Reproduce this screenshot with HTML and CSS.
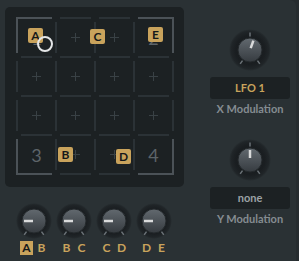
FILE: index.html
```html
<!DOCTYPE html>
<html lang="en">
  <head>
    <meta charset="UTF-8" />
    <title>XY Pad</title>
    <link rel="stylesheet" href="styles.css">
  </head>
  <body>
    <svg class="defs" width="0" height="0">
      <defs>
        <radialGradient id="halo">
          <stop offset="0" stop-color="#15191b" />
          <stop offset="0.7" stop-color="#1a1e21" />
          <stop offset="0.9" stop-color="#202528" />
          <stop offset="1" stop-color="#2a3134" />
        </radialGradient>
        <linearGradient id="body" x1="0" y1="0" x2="0" y2="1">
          <stop offset="0" stop-color="#62696f" />
          <stop offset="1" stop-color="#363b40" />
        </linearGradient>
      </defs>
    </svg>

    <div class="app">
      <div class="left">
        <div class="pad">
          <div class="grid">
            <svg class="lines" width="158" height="158" viewBox="0 0 158 158">
              <path stroke="#2b3236" stroke-width="2" fill="none"
                d="M44 1H75M83 1H114
                   M5 40H36M44 40H75M83 40H114M122 40H153
                   M5 79H36M44 79H75M83 79H114M122 79H153
                   M5 118H36M44 118H75M83 118H114M122 118H153
                   M44 157H75M83 157H114
                   M1 44V75M1 83V114
                   M40 5V36M40 44V75M40 83V114M40 122V153
                   M79 5V36M79 44V75M79 83V114M79 122V153
                   M118 5V36M118 44V75M118 83V114M118 122V153
                   M157 44V75M157 83V114" />
              <path stroke="#4b5257" stroke-width="2" fill="none"
                d="M1 36V1H36M122 1H157V36M1 122V157H36M122 157H157V122" />
              <path stroke="#394145" stroke-width="1" fill="none"
                d="M55 20.5h9M59.5 16v9M94 20.5h9M98.5 16v9
                   M16 59.5h9M20.5 55v9M55 59.5h9M59.5 55v9M94 59.5h9M98.5 55v9M133 59.5h9M137.5 55v9
                   M16 98.5h9M20.5 94v9M55 98.5h9M59.5 94v9M94 98.5h9M98.5 94v9M133 98.5h9M137.5 94v9
                   M55 137.5h9M59.5 133v9M94 137.5h9M98.5 133v9" />
            </svg>
            <div class="cell">1</div><div class="cell"></div><div class="cell"></div><div class="cell">2</div>
            <div class="cell"></div><div class="cell"></div><div class="cell"></div><div class="cell"></div>
            <div class="cell"></div><div class="cell"></div><div class="cell"></div><div class="cell"></div>
            <div class="cell">3</div><div class="cell"></div><div class="cell"></div><div class="cell">4</div>

            <span class="tag" style="left: 12px; top: 11px">A</span>
            <span class="tag" style="left: 74px; top: 12px">C</span>
            <span class="tag" style="left: 132px; top: 10px">E</span>
            <span class="tag" style="left: 42px; top: 130px">B</span>
            <span class="tag" style="left: 100px; top: 132px">D</span>
            <span class="cursor" style="left: 21px; top: 19px"></span>
          </div>
        </div>

        <div class="morph">
          <div class="morph-item">
            <svg class="knob" width="40" height="40" viewBox="-20 -20 40 40">
              <circle r="18" fill="url(#halo)" />
              <path d="M-7.5 10.6L-9.8 13.9M7.5 10.6L9.8 13.9" stroke="#6b7277" stroke-width="1.5" />
              <circle r="12" fill="url(#body)" stroke="#24292c" stroke-width="1" />
              <path d="M-10 0H-1" stroke="#d9dadb" stroke-width="2.5" />
            </svg>
            <div class="pair"><span class="on">A</span><span>B</span></div>
          </div>
          <div class="morph-item">
            <svg class="knob" width="40" height="40" viewBox="-20 -20 40 40">
              <circle r="18" fill="url(#halo)" />
              <path d="M-7.5 10.6L-9.8 13.9M7.5 10.6L9.8 13.9" stroke="#6b7277" stroke-width="1.5" />
              <circle r="12" fill="url(#body)" stroke="#24292c" stroke-width="1" />
              <path d="M-10 0H-1" stroke="#d9dadb" stroke-width="2.5" />
            </svg>
            <div class="pair"><span>B</span><span>C</span></div>
          </div>
          <div class="morph-item">
            <svg class="knob" width="40" height="40" viewBox="-20 -20 40 40">
              <circle r="18" fill="url(#halo)" />
              <path d="M-7.5 10.6L-9.8 13.9M7.5 10.6L9.8 13.9" stroke="#6b7277" stroke-width="1.5" />
              <circle r="12" fill="url(#body)" stroke="#24292c" stroke-width="1" />
              <path d="M-10 0H-1" stroke="#d9dadb" stroke-width="2.5" />
            </svg>
            <div class="pair"><span>C</span><span>D</span></div>
          </div>
          <div class="morph-item">
            <svg class="knob" width="40" height="40" viewBox="-20 -20 40 40">
              <circle r="18" fill="url(#halo)" />
              <path d="M-7.5 10.6L-9.8 13.9M7.5 10.6L9.8 13.9" stroke="#6b7277" stroke-width="1.5" />
              <circle r="12" fill="url(#body)" stroke="#24292c" stroke-width="1" />
              <path d="M-10 0H-1" stroke="#d9dadb" stroke-width="2.5" />
            </svg>
            <div class="pair"><span>D</span><span>E</span></div>
          </div>
        </div>
      </div>

      <div class="right">
        <div class="mod">
          <svg class="knob" width="44" height="44" viewBox="-22 -22 44 44">
            <circle r="21" fill="url(#halo)" />
            <path d="M0 -13.5V-17.5M-7.5 10.6L-9.8 13.9M7.5 10.6L9.8 13.9" stroke="#6b7277" stroke-width="1.5" />
            <circle r="12" fill="url(#body)" stroke="#24292c" stroke-width="1" />
            <path d="M0.7 -1.9L3.4 -9.4" stroke="#d9dadb" stroke-width="2.5" />
          </svg>
          <div class="source active">LFO 1</div>
          <div class="caption">X Modulation</div>
        </div>
        <div class="mod">
          <svg class="knob" width="44" height="44" viewBox="-22 -22 44 44">
            <circle r="21" fill="url(#halo)" />
            <path d="M0 -13.5V-17.5M-7.5 10.6L-9.8 13.9M7.5 10.6L9.8 13.9" stroke="#6b7277" stroke-width="1.5" />
            <circle r="12" fill="url(#body)" stroke="#24292c" stroke-width="1" />
            <path d="M0 -2V-10" stroke="#d9dadb" stroke-width="2.5" />
          </svg>
          <div class="source">none</div>
          <div class="caption">Y Modulation</div>
        </div>
      </div>
    </div>
  </body>
</html>
```

FILE: styles.css
```css
body {
  margin: 0;
  background-color: #262c2f;
  font-family: Lato, "Open Sans", sans-serif;
}
.defs {
  position: absolute;
}
.app {
  display: flex;
  width: 296px;
  height: 261px;
  box-sizing: border-box;
  padding: 7px 0 0 5px;
  background-color: #2a3134;
  border-top-right-radius: 6px;
}
.left {
  width: 179px;
}
.pad {
  width: 179px;
  height: 180px;
  box-sizing: border-box;
  padding: 10px 0 0 11px;
  background-color: #1c2123;
  border-radius: 5px;
}
.grid {
  position: relative;
  width: 158px;
  height: 158px;
  box-sizing: border-box;
  padding: 1px;
  display: grid;
  grid-template-columns: repeat(4, 39px);
  grid-template-rows: repeat(4, 39px);
}
.lines {
  position: absolute;
  left: 0;
  top: 0;
}
.cell {
  display: flex;
  align-items: center;
  justify-content: center;
  color: #5d6469;
  font-size: 18px;
}
.tag {
  position: absolute;
  width: 15px;
  height: 15px;
  line-height: 15px;
  text-align: center;
  background-color: #c9a35c;
  border-radius: 2px;
  color: #15181a;
  font-size: 12px;
  font-weight: bold;
}
.cursor {
  position: absolute;
  width: 12px;
  height: 12px;
  border: 2px solid #e4e6e7;
  border-radius: 50%;
}
.morph {
  display: flex;
  padding: 14px 0 0 9px;
}
.morph-item {
  width: 40px;
  display: flex;
  flex-direction: column;
  align-items: center;
}
.knob {
  display: block;
}
.pair {
  display: flex;
  gap: 2px;
}
.pair span {
  width: 13px;
  height: 14px;
  line-height: 14px;
  text-align: center;
  color: #c9a35c;
  font-size: 12px;
  font-weight: bold;
}
.pair .on {
  background-color: #c9a35c;
  color: #15181a;
}
.right {
  width: 90px;
  margin-left: 21px;
}
.mod {
  display: flex;
  flex-direction: column;
  align-items: center;
  padding-top: 21px;
}
.mod + .mod {
  padding-top: 23px;
}
.source {
  width: 80px;
  height: 22px;
  margin-top: 5px;
  line-height: 22px;
  text-align: center;
  background-color: #1c2123;
  border-radius: 3px;
  color: #9ba1a5;
  font-size: 11px;
  font-weight: bold;
}
.source.active {
  color: #c9a35c;
}
.caption {
  margin-top: 3px;
  color: #858c91;
  font-size: 11px;
  font-weight: bold;
}
```
